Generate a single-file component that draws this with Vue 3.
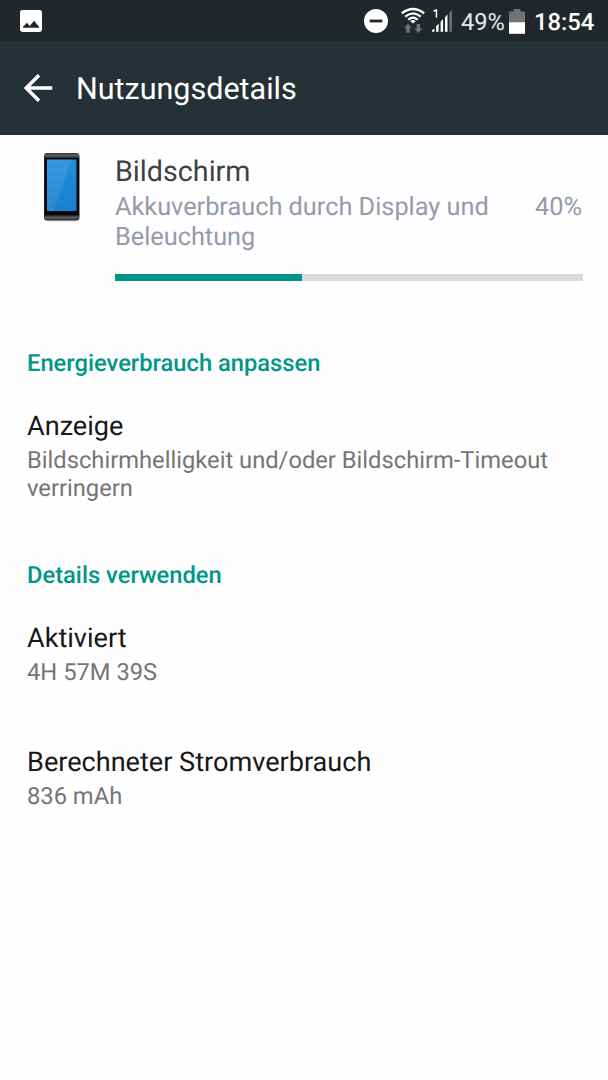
<script setup>
const usage = { name: 'Bildschirm', percent: 40 }

const sections = [
  {
    title: 'Energieverbrauch anpassen',
    items: [
      {
        title: 'Anzeige',
        lines: ['Bildschirmhelligkeit und/oder Bildschirm-Timeout', 'verringern'],
      },
    ],
  },
  {
    title: 'Details verwenden',
    items: [
      { title: 'Aktiviert', lines: ['4H 57M 39S'] },
      { title: 'Berechneter Stromverbrauch', lines: ['836 mAh'] },
    ],
  },
]
</script>

<template>
  <div class="screen">
    <div class="status">
      <svg class="picture" width="22" height="22" viewBox="0 0 22 22">
        <rect width="22" height="22" rx="2.4" fill="#fff" />
        <path d="M3 17.8V16.8L7 12.8L9.7 16L14 10.8L19 16.8V17.8Z" fill="#21272b" />
      </svg>
      <svg class="dnd" width="24" height="24" viewBox="0 0 24 24">
        <circle cx="12" cy="12" r="12" fill="#fff" />
        <rect x="5.7" y="10.6" width="12.6" height="2.8" fill="#21272b" />
      </svg>
      <svg class="wifi" width="24" height="28" viewBox="0 0 24 28">
        <g fill="none" stroke="#fff" stroke-width="2.2">
          <path d="M.8 6.4Q12 -2.4 23.2 6.4" />
          <path d="M4.2 9.7Q12 3 19.8 9.7" />
          <path d="M7.3 12.7Q12 8.4 16.7 12.7" />
        </g>
        <path d="M9.2 13.9Q12 12 14.8 13.9L12 16.6Z" fill="#fff" />
        <path d="M7 16.8L11 21.3H8.7V25.8H5.3V21.3H3Z" fill="#717477" />
        <path d="M17.3 26L13.3 21.5H15.6V17H19V21.5H21.3Z" fill="#717477" />
      </svg>
      <div class="signal">
        <svg width="21" height="25" viewBox="0 0 21 25">
          <path d="M0 22.7V21.6L2.4 19.2V22.7Z" fill="#fff" />
          <path d="M4.1 22.7V17.3L6.6 14.6V22.7Z" fill="#fff" />
          <path d="M8.6 22.7V12.8L11.1 10.1V22.7Z" fill="#fff" />
          <path d="M13 22.7V8.2L15.5 5.5V22.7Z" fill="#fff" />
          <path d="M17.4 22.7V3.7L19.9 1V22.7Z" fill="#717477" />
        </svg>
        <svg class="sim" width="6" height="9" viewBox="0 0 6 9">
          <path d="M.5 2.2L3.4 1V8.6" fill="none" stroke="#fff" stroke-width="1.5" />
        </svg>
      </div>
      <span class="charge">49%</span>
      <svg class="battery" width="16" height="25" viewBox="0 0 16 25">
        <path d="M0 2.5H4.6V0H11.4V2.5H16V13.5H0Z" fill="#717477" />
        <rect y="13.2" width="16" height="11.6" fill="#fff" />
      </svg>
      <span class="clock">18:54</span>
    </div>

    <header class="appbar">
      <svg width="29" height="28" viewBox="0 0 29 28">
        <path d="M15 1.2L2.2 14L15 26.8M2.2 14H28.3" fill="none" stroke="#fff" stroke-width="3.5" />
      </svg>
      <h1>Nutzungsdetails</h1>
    </header>

    <section class="usage">
      <svg class="phone" width="38" height="72" viewBox="0 0 38 72">
        <defs>
          <linearGradient id="cap" x1="0" y1="0" x2="0" y2="1">
            <stop offset="0" stop-color="#34373a" />
            <stop offset=".5" stop-color="#5b5e61" />
            <stop offset="1" stop-color="#25272a" />
          </linearGradient>
          <linearGradient id="glass" x1="0" y1="0" x2="0" y2="1">
            <stop offset="0" stop-color="#2390de" />
            <stop offset="1" stop-color="#1a80cd" />
          </linearGradient>
          <pattern id="grid" width="4" height="4" patternUnits="userSpaceOnUse">
            <path d="M0 3.5H4M3.5 0V4" stroke="#0d6fbb" stroke-width=".6" opacity=".2" fill="none" />
          </pattern>
        </defs>
        <rect x="1" y="4" width="35.5" height="65.5" rx="4" fill="#b9bcc0" opacity=".55" />
        <rect x="1" y="1" width="35.5" height="67.5" rx="3.5" fill="#2b2e31" />
        <rect x="1.5" y="1" width="34.5" height="5" rx="2.5" fill="url(#cap)" />
        <rect x="1.5" y="6" width="34.5" height="57.5" fill="#08090b" />
        <rect x="1.5" y="63.5" width="34.5" height="4.5" rx="2" fill="url(#cap)" />
        <rect x="4" y="7.5" width="29.5" height="51.5" fill="url(#glass)" />
        <path d="M4 7.5H28.5L10.5 59H4Z" fill="#fff" opacity=".09" />
        <rect x="4" y="7.5" width="29.5" height="51.5" fill="url(#grid)" />
      </svg>
      <div class="info">
        <h2>{{ usage.name }}</h2>
        <div class="summary">
          <p>Akkuverbrauch durch Display und<br />Beleuchtung</p>
          <span>{{ usage.percent }}%</span>
        </div>
        <div class="track"><div class="fill" :style="{ width: usage.percent + '%' }"></div></div>
      </div>
    </section>

    <section v-for="section in sections" :key="section.title" class="group">
      <h3>{{ section.title }}</h3>
      <div v-for="item in section.items" :key="item.title" class="item">
        <h4>{{ item.title }}</h4>
        <p v-for="line in item.lines" :key="line">{{ line }}</p>
      </div>
    </section>
  </div>
</template>

<style>
body { margin: 0; background: #fefefe; }
</style>

<style scoped>
.screen { width: 608px; height: 1080px; overflow: hidden; background: #fefefe; font-family: Roboto, "Noto Sans", sans-serif; text-rendering: geometricPrecision; }
.screen * { box-sizing: border-box; }
h1, h2, h3, h4, p { margin: 0; font-weight: 400; white-space: nowrap; }
svg { display: block; flex: none; }
.status { display: flex; height: 41px; padding-left: 20px; background: #21272b; color: #fff; }
.picture { margin-top: 10px; }
.dnd { margin: 9px 0 0 322px; }
.wifi { margin: 7px 0 0 13px; }
.signal { position: relative; margin: 9px 0 0 7px; }
.sim { position: absolute; left: 1px; top: 0; }
.charge { width: 48px; margin-left: 8px; font-size: 23.65px; line-height: 44px; color: #e9eaea; }
.battery { margin: 9px 0 0 0; }
.clock { margin-left: 9px; font-size: 23.8px; line-height: 44px; font-weight: 500; }
.appbar { display: flex; height: 94px; padding-left: 24px; background: #263137; color: #fff; }
.appbar svg { margin-top: 33px; }
.appbar h1 { margin-left: 23px; font-size: 30.5px; line-height: 98px; }
.usage { display: flex; height: 213px; }
.phone { margin: 17px 0 0 43px; }
.info { width: 468px; margin: 20px 0 0 34px; }
.info h2 { font-size: 28.7px; line-height: 34px; color: #3c4247; }
.summary { display: flex; justify-content: space-between; margin-top: 4px; padding-right: 1px; font-size: 25.3px; line-height: 30px; color: #949bab; }
.track { height: 7px; margin-top: 21px; background: #d8dcdc; }
.fill { height: 100%; background: #009688; }
.group { padding-left: 27px; }
.group + .group { margin-top: 58px; }
.group h3 { margin-bottom: 32px; font-size: 23.73px; line-height: 30px; font-weight: 500; color: #009688; }
.item + .item { margin-top: 60px; }
.item h4 { margin-bottom: 4px; font-size: 27.1px; line-height: 32px; color: #181818; }
.item p { font-size: 23.73px; line-height: 28px; color: #757575; }
</style>
